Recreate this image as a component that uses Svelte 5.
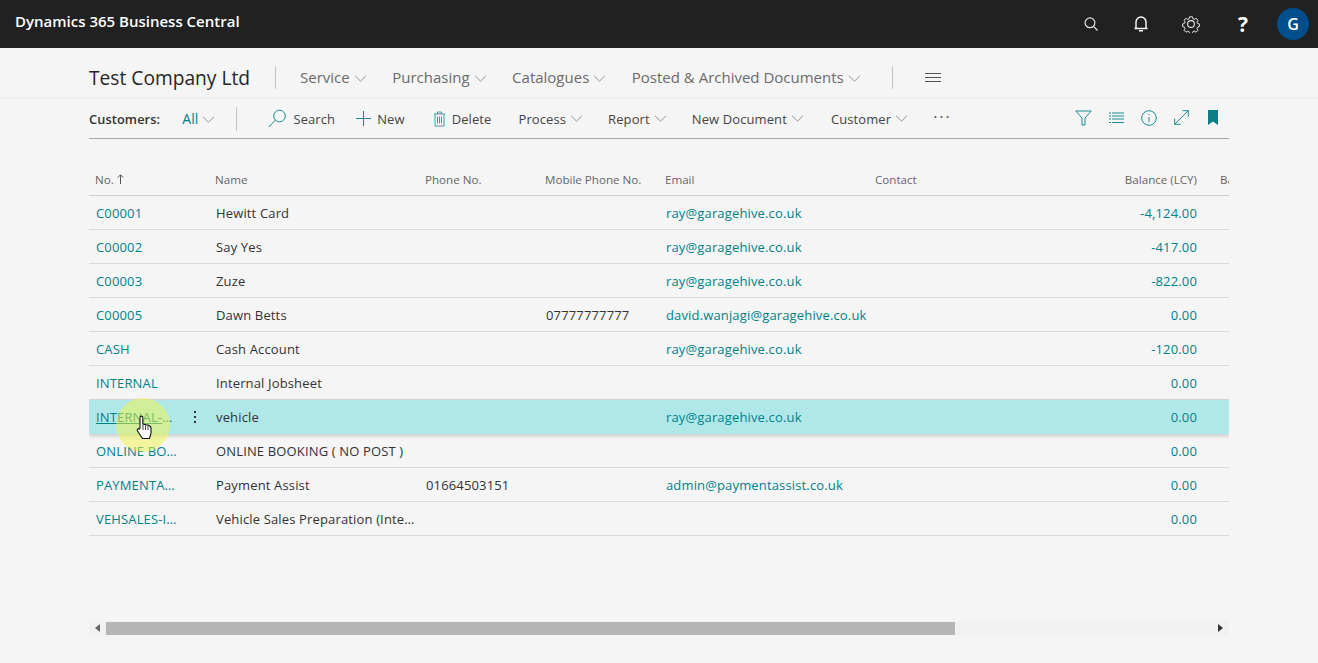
<script lang="ts">
	const menus = ['Service', 'Purchasing', 'Catalogues', 'Posted & Archived Documents'];
	const rows = [
		{ no: 'C00001', name: 'Hewitt Card', phone: '', mobile: '', email: 'ray@garagehive.co.uk', balance: '-4,124.00' },
		{ no: 'C00002', name: 'Say Yes', phone: '', mobile: '', email: 'ray@garagehive.co.uk', balance: '-417.00' },
		{ no: 'C00003', name: 'Zuze', phone: '', mobile: '', email: 'ray@garagehive.co.uk', balance: '-822.00' },
		{ no: 'C00005', name: 'Dawn Betts', phone: '', mobile: '07777777777', email: 'david.wanjagi@garagehive.co.uk', balance: '0.00' },
		{ no: 'CASH', name: 'Cash Account', phone: '', mobile: '', email: 'ray@garagehive.co.uk', balance: '-120.00' },
		{ no: 'INTERNAL', name: 'Internal Jobsheet', phone: '', mobile: '', email: '', balance: '0.00' },
		{ no: 'INTERNAL-VEH', name: 'vehicle', phone: '', mobile: '', email: 'ray@garagehive.co.uk', balance: '0.00', selected: true },
		{ no: 'ONLINE BOOKING', name: 'ONLINE BOOKING ( NO POST )', phone: '', mobile: '', email: '', balance: '0.00' },
		{ no: 'PAYMENTASSIST', name: 'Payment Assist', phone: '01664503151', mobile: '', email: 'admin@paymentassist.co.uk', balance: '0.00' },
		{ no: 'VEHSALES-INTERNAL', name: 'Vehicle Sales Preparation (Internal)', phone: '', mobile: '', email: '', balance: '0.00' }
	];
</script>

{#snippet chevron()}
	<svg class="chev" width="13" height="7" viewBox="0 0 13 7" fill="none"><path d="M1 .8l5.500 5.400L12 .8" stroke="#8a8a8a" stroke-width=".9" /></svg>
{/snippet}

<header class="topbar">
	<span class="brand">Dynamics 365 Business Central</span>
	<div class="top-icons">
		<span class="cell"><svg width="16" height="16" viewBox="0 0 16 16" fill="none" stroke="#e4e4e4" stroke-width="1.200"><circle cx="7" cy="6.800" r="4.900" /><path d="M10.500 10.400l4 4.100" /></svg></span>
		<span class="cell"><svg width="16" height="18" viewBox="0 0 16 18" fill="none" stroke="#fff" stroke-width="1.400"><path d="M3 13.500V7a5 5 0 0110 0v6.500zM1.500 13.500h13M6 15.800h4" /></svg></span>
		<span class="cell"><svg width="18" height="18" viewBox="0 0 18 18" fill="none" stroke="#e8e8e8" stroke-width="1.100"><path d="M7.400 1h3.200l.5 2.200 1.600.7 1.900-1.200 2.200 2.200-1.200 1.900.7 1.600 2 .5v3l-2 .5-.7 1.600 1.200 1.900-2.200 2.200-1.900-1.200-1.600.7-.5 2H7.400l-.5-2-1.600-.7-1.900 1.200-2.200-2.200 1.200-1.900-.7-1.600-2-.5v-3l2-.5.7-1.600L1.200 4.900l2.200-2.200 1.900 1.200 1.600-.7z" transform="translate(.9 .9) scale(.9)" /><circle cx="9" cy="9" r="3.400" /></svg></span>
		<span class="cell help">?</span>
		<span class="cell"><span class="avatar">G</span></span>
	</div>
</header>

<main class="page">
	<nav class="menu">
		<h1>Test Company Ltd</h1>
		<span class="rule"></span>
		<ul>
			{#each menus as item}
				<li>{item}{@render chevron()}</li>
			{/each}
		</ul>
		<span class="rule rule--end"></span>
		<svg class="burger" width="16" height="10" viewBox="0 0 16 10" stroke="#555" stroke-width="1"><path d="M0 .5h16M0 4.500h16M0 8.500h16" /></svg>
	</nav>

	<div class="actions">
		<b class="caption">Customers:</b>
		<span class="view">All{@render chevron()}</span>
		<span class="rule rule--short"></span>
		<span class="act act--search">
			<svg width="19" height="19" viewBox="0 0 19 19" fill="none" stroke="#1b8a90" stroke-width="1"><circle cx="11.500" cy="7" r="5.800" /><path d="M7.400 11.100L.8 18" /></svg>Search
		</span>
		<span class="act act--new">
			<svg width="15" height="15" viewBox="0 0 15 15" stroke="#1b8a90" stroke-width="1.100"><path d="M7.500 0v15M0 7.500h15" /></svg>New
		</span>
		<span class="act act--delete">
			<svg width="13" height="16" viewBox="0 0 13 16" fill="none" stroke="#3f9ea3" stroke-width="1"><path d="M1 3h11M4.500 3V1h4v2M2 3v12h9V3M4.500 5.500v7M6.500 5.500v7M8.500 5.500v7" /></svg>Delete
		</span>
		<span class="act act--drop act--first">Process{@render chevron()}</span>
		<span class="act act--drop">Report{@render chevron()}</span>
		<span class="act act--drop">New Document{@render chevron()}</span>
		<span class="act act--drop act--last">Customer{@render chevron()}</span>
		<span class="dots">···</span>
		<div class="tools">
			<svg width="17" height="16" viewBox="0 0 17 16" fill="none" stroke="#1b8a90" stroke-width="1"><path d="M.8 1h15.400L10 8v7H7V8z" /></svg>
			<svg width="15" height="12" viewBox="0 0 15 12" stroke="#1b8a90" stroke-width="1"><path d="M0 1h2M3 1h12M0 4h2M3 4h12M0 7h2M3 7h12M0 10.500h2M3 10.500h12" /></svg>
			<svg width="16" height="16" viewBox="0 0 16 16" fill="none" stroke="#1b8a90" stroke-width="1"><circle cx="8" cy="8" r="7.300" /><path d="M8 7v5M8 4v1.200" /></svg>
			<svg width="15" height="15" viewBox="0 0 15 15" fill="none" stroke="#1b8a90" stroke-width="1"><path d="M.7 14.300L14.300.7M8.500.7h5.800v5.800M.7 8.500v5.800h5.800" /></svg>
			<svg class="mark" width="10" height="15" viewBox="0 0 10 15" fill="#0b7f85"><path d="M0 0h10v15L5 11.500 0 15z" /></svg>
		</div>
	</div>

	<section class="list">
		<div class="row row--head">
			<span>No. <svg width="7" height="10" viewBox="0 0 7 10" fill="none" stroke="#555"><path d="M3.500 10V1M.8 3.500l2.700-2.700 2.700 2.700" /></svg></span>
			<span>Name</span>
			<span>Phone No.</span>
			<span>Mobile Phone No.</span>
			<span>Email</span>
			<span>Contact</span>
			<span class="num">Balance (LCY)</span>
			<span class="next">Balance</span>
		</div>
		{#each rows as row}
			<div class="row" class:row--selected={row.selected}>
				<span class="link key" class:link--on={row.selected}>{row.no}</span>
				<span class="name">{row.name}</span>
				<span>{row.phone}</span>
				<span>{row.mobile}</span>
				<span class="link wide">{row.email}</span>
				<span></span>
				<span class="link num">{row.balance}</span>
				<span></span>
				{#if row.selected}
					<i class="kebab"></i>
				{/if}
			</div>
		{/each}
	</section>

	<div class="scroll">
		<svg width="5" height="8" viewBox="0 0 5 8" fill="#666"><path d="M5 0v8L0 4z" /></svg>
		<div class="track"><div class="thumb"></div></div>
		<svg width="5" height="8" viewBox="0 0 5 8" fill="#333"><path d="M0 0v8l5-4z" /></svg>
	</div>
</main>

<div class="cursor">
	<svg width="18" height="25" viewBox="0 0 16 25" fill="#fff" stroke="#111" stroke-width="1.100"><path d="M4 13V2.500a1.400 1.400 0 012.800 0V9l5.500 1.300c1.700.4 2.700 1.300 2.700 3v4.500c0 2-.7 3-1.700 5.700H6.500L1.500 16c-1-1.400.8-3 2-2z" /><path d="M7 10v5M9.500 10.500V15M12 11v4" stroke-width=".8" /></svg>
</div>

<style>
	:global(body) {
		background: #f5f5f5;
		font-family: 'Open Sans', 'Noto Sans', sans-serif;
		font-size: 13px;
		color: #333;
		overflow: hidden;
	}

	.topbar {
		height: 48px;
		padding-left: 15px;
		display: flex;
		align-items: center;
		justify-content: space-between;
		background: #212121;
		color: #fff;
	}

	.brand {
		font-size: 15px;
		font-weight: 600;
		margin-top: -7px;
	}

	.top-icons {
		display: flex;
		align-items: center;
	}

	.cell {
		width: 50px;
		display: flex;
		justify-content: center;
		align-items: center;
	}

	.help {
		width: 52px;
		padding-left: 2px;
		box-sizing: border-box;
		font-size: 21px;
		font-weight: 700;
		line-height: 1;
	}

	.avatar {
		width: 32px;
		height: 32px;
		border-radius: 50%;
		display: grid;
		place-items: center;
		background: #004e8c;
		font-size: 16px;
		font-weight: 600;
	}

	.page {
		width: 1140px;
		margin-left: 89px;
	}

	.menu {
		position: relative;
		height: 51px;
		padding-top: 8px;
		box-sizing: border-box;
		display: flex;
		align-items: center;
		gap: 24px;
	}

	.menu::after {
		content: '';
		position: absolute;
		left: -89px;
		width: 1318px;
		bottom: 0;
		border-bottom: 1px solid #ececec;
	}

	h1 {
		margin: 0 1px 0 0;
		font-size: 19.200px;
		font-weight: 400;
		color: #262626;
		white-space: nowrap;
	}

	.rule {
		width: 1px;
		height: 23px;
		background: #c4c4c4;
	}

	.rule--end {
		margin-left: 7px;
	}

	.rule--short {
		margin: 0 4px 0 21px;
		height: 24px;
	}

	.menu ul {
		list-style: none;
		margin: -2px 0 0;
		padding: 0;
		display: flex;
		gap: 25.500px;
		font-size: 15px;
		color: #6b6b6b;
	}

	.menu li {
		white-space: nowrap;
	}

	.burger {
		margin-left: 8px;
	}

	.chev {
		margin-left: 4px;
		vertical-align: 1px;
	}

	.actions {
		height: 39px;
		display: flex;
		align-items: center;
		border-bottom: 1px solid #a6a6a6;
		white-space: nowrap;
		letter-spacing: 0.1px;
	}

	.caption {
		font-weight: 600;
		font-size: 12.800px;
		letter-spacing: 0.1px;
	}

	.view {
		margin-left: 22px;
		font-size: 14px;
		color: #00828a;
	}

	.act {
		display: inline-flex;
		align-items: center;
		gap: 6px;
		color: #444;
	}

	.act--search {
		margin-left: 27px;
	}

	.act--new {
		margin-left: 21px;
	}

	.act--delete {
		margin-left: 28px;
	}

	.act--drop {
		gap: 0;
		margin-left: 25px;
	}

	.act--first {
		margin-left: 27px;
	}

	.act--last {
		margin-left: 27px;
	}

	.dots {
		margin-left: 25px;
		font-size: 16px;
		color: #555;
		margin-top: -4px;
		letter-spacing: 2px;
	}

	.tools {
		margin-left: auto;
		margin-right: 11px;
		margin-top: -2px;
		display: flex;
		align-items: center;
		gap: 17px;
	}

	.mark {
		margin-left: 2px;
	}

	.list {
		margin-top: 24px;
		overflow: hidden;
		position: relative;
	}

	.row {
		position: relative;
		display: grid;
		grid-template-columns: 120px 210px 120px 120px 210px 210px 134px 120px;
		height: 34px;
		align-items: center;
		border-bottom: 1px solid #d9d9d9;
		box-sizing: border-box;
		white-space: nowrap;
		letter-spacing: 0.15px;
	}

	.row > span {
		padding: 0 7px;
		overflow: hidden;
		text-overflow: ellipsis;
	}

	.row--head {
		height: 33px;
		font-size: 11.600px;
		letter-spacing: 0;
		color: #666;
		border-bottom-color: #cfcfcf;
	}

	.row--head > span {
		padding: 0 6px;
	}

	.row--head > .next {
		padding-left: 7px;
	}

	.row > .name {
		padding-right: 2px;
	}

	.row--selected {
		background: #b0e8ea;
		box-shadow: 0 2px 4px rgba(0, 0, 0, 0.18);
		z-index: 1;
		border-bottom-color: transparent;
	}

	.link {
		color: #00828a;
	}

	.key {
		width: 98px;
		box-sizing: border-box;
	}

	.link--on {
		text-decoration: underline;
	}

	.wide {
		overflow: visible !important;
	}

	.num {
		text-align: right;
		padding-right: 16px !important;
	}

	.kebab {
		position: absolute;
		left: 105px;
		top: 11px;
		width: 2px;
		height: 2px;
		background: #333;
		box-shadow: 0 5px 0 #333, 0 10px 0 #333;
	}

	.scroll {
		margin-top: 85px;
		height: 14px;
		display: flex;
		align-items: center;
		gap: 6px;
		padding: 0 6px;
		background: #f1f1f1;
	}

	.track {
		flex: 1;
		height: 13px;
	}

	.thumb {
		width: 849px;
		height: 100%;
		background: #b5b5b5;
	}

	.cursor {
		position: fixed;
		left: 116px;
		top: 398px;
		width: 54px;
		height: 54px;
		border-radius: 50%;
		background: rgba(240, 245, 70, 0.5);
		z-index: 2;
	}

	.cursor svg {
		position: absolute;
		left: 19px;
		top: 17px;
	}
</style>
